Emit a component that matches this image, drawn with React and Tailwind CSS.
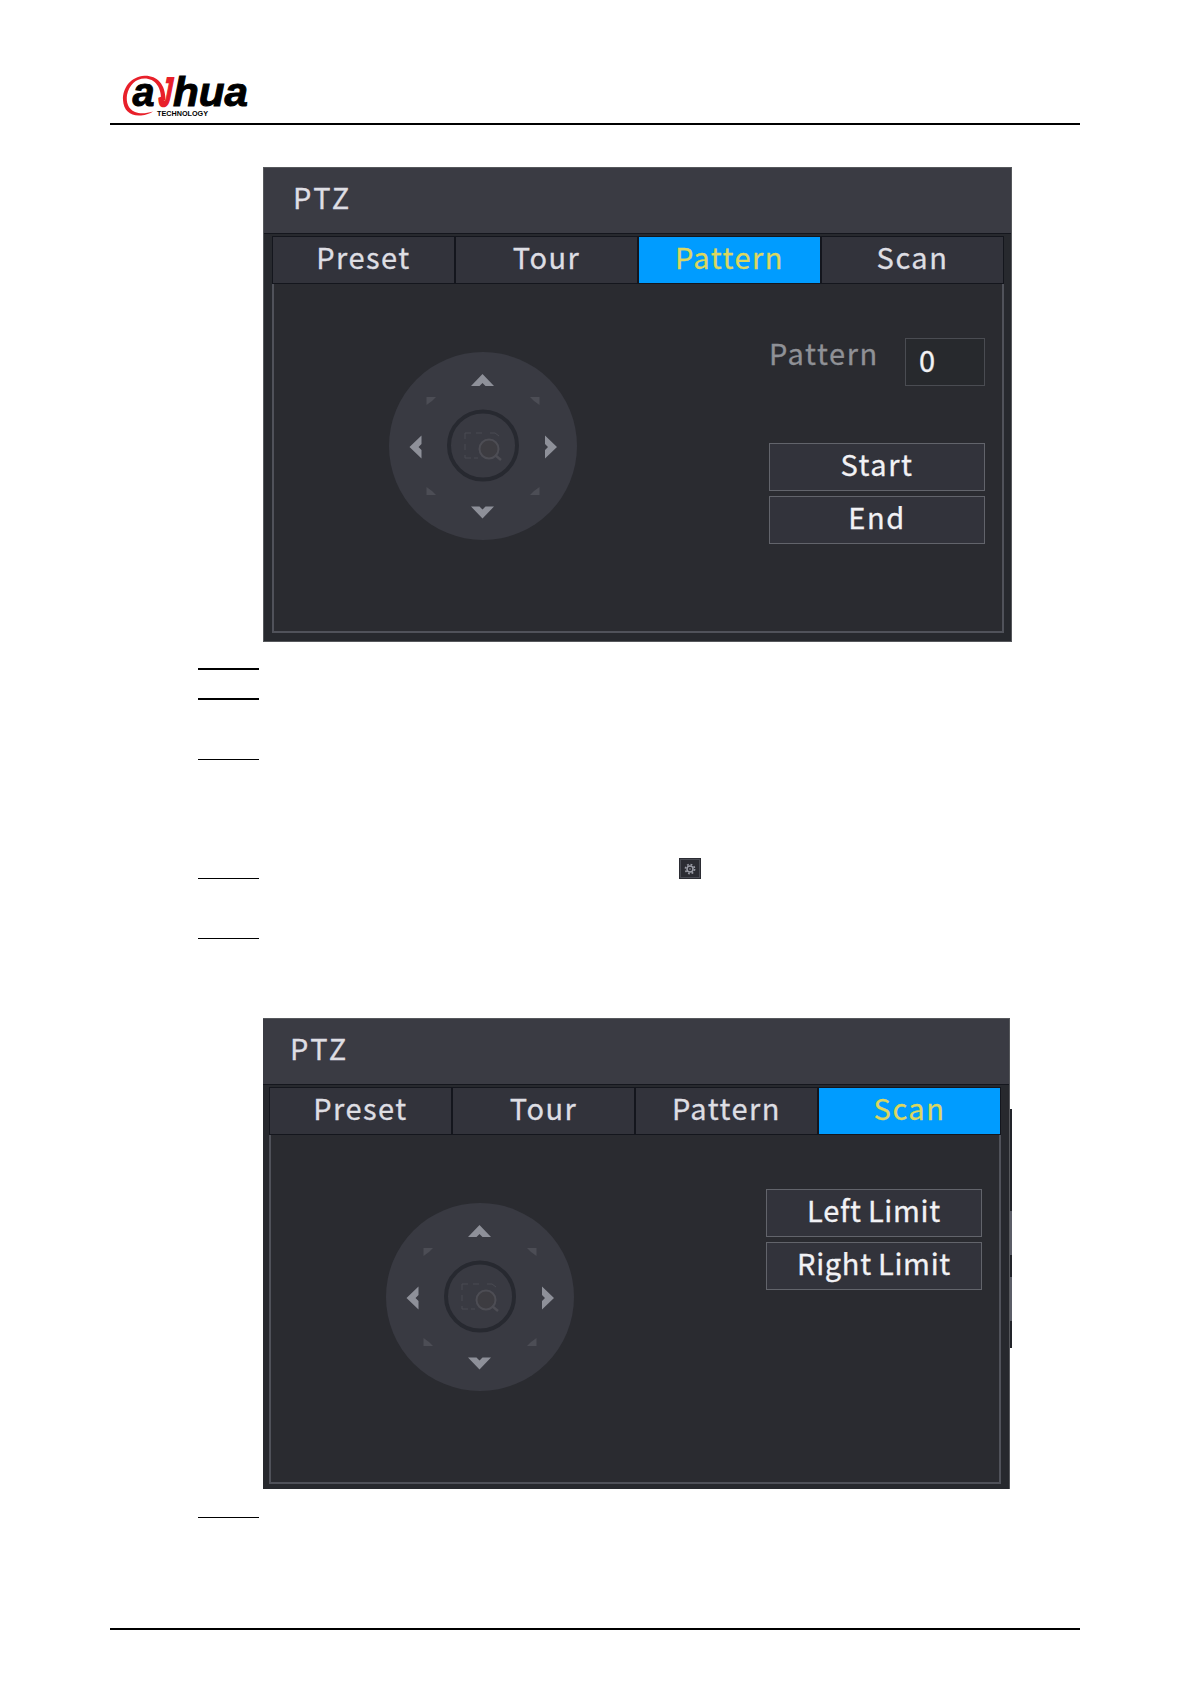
import clsx from 'clsx';

const TABS = ['Preset', 'Tour', 'Pattern', 'Scan'];

const ARROWS = [
  'translate(-0.5 -72)',
  'translate(74 1) rotate(90)',
  'translate(-0.5 72.5) rotate(180)',
  'translate(-73.5 1) rotate(-90)',
];

const CORNERS = ['scale(1 1)', 'scale(-1 1)', 'scale(1 -1)', 'scale(-1 -1)'];

function Logo() {
  return (
    <svg width="130" height="48" viewBox="0 0 130 48" className="block overflow-visible">
      <path
        d="M43.500 28C43.500 12 35 3.500 22.500 3.800C9 4.500 0.500 16 1 28C1.500 39 9 44.500 19 43.500C24 43 28 41.500 31 39.500C24 41.500 18 42 13 40C6 37 4 30 5 23C7 13 14 6.500 22.500 6.500C33 6.500 40 15 39 30Z"
        fill="#e8202a"
      />
      <g fontFamily="Liberation Sans, Arial, sans-serif" fontWeight="700" fontStyle="italic" fontSize="41">
        <text x="10.500" y="34" textLength="22" lengthAdjust="spacingAndGlyphs" stroke="#000" strokeWidth="1">a</text>
        <text
          x="36.500"
          y="33.500"
          textLength="13"
          lengthAdjust="spacingAndGlyphs"
          fill="#e8202a"
          stroke="#e8202a"
          strokeWidth="1.800"
          transform="translate(2.5 0) skewX(-5)"
        >
          J
        </text>
        <text x="51" y="34" textLength="75" lengthAdjust="spacingAndGlyphs" stroke="#000" strokeWidth="1">hua</text>
      </g>
      <text
        x="35"
        y="43.700"
        textLength="51"
        lengthAdjust="spacingAndGlyphs"
        fontFamily="Liberation Sans, Arial, sans-serif"
        fontWeight="700"
        fontSize="6.500"
      >
        TECHNOLOGY
      </text>
    </svg>
  );
}

function DirectionPad({ className }) {
  return (
    <svg width="188" height="188" viewBox="-94 -94 188 188" className={className}>
      <circle r="94" fill="#393a42" />
      <circle cy="-0.500" r="34" fill="#393a42" stroke="#272930" strokeWidth="4" />
      {ARROWS.map((transform) => (
        <path key={transform} transform={transform} d="M0 0L11.500 12H3L0 9L-3 12H-11.500Z" fill="#8e9099" />
      ))}
      {CORNERS.map((transform) => (
        <path key={transform} transform={transform} d="M-56.500-49H-47L-51-45L-56.500-41Z" fill="#4c4d55" />
      ))}
      <path d="M-18-7V-13H-12M-7-13H-1M7-13H12L16-10M-18-2V4M-18 9V12H-12M-9 12H-5" fill="none" stroke="#4a4b53" />
      <circle cx="6" cy="3" r="9.500" fill="#3d3c41" stroke="#4d4d54" strokeWidth="2" />
      <path d="M12 9L18 14" stroke="#4d4d54" strokeWidth="2.500" />
    </svg>
  );
}

function TitleBar({ className }) {
  return (
    <div
      className={clsx(
        'flex h-[66px] shrink-0 items-center border-b border-[#14161d] bg-[#3a3b43] pb-[9px] tracking-[2.8px] text-[#dedee3]',
        className,
      )}
    >
      PTZ
    </div>
  );
}

function TabBar({ active }) {
  return (
    <div className="grid h-12 shrink-0 grid-cols-4 bg-[#14161d] py-px tracking-[1.5px]">
      {TABS.map((tab) => (
        <div
          key={tab}
          className={clsx(
            'mx-px flex h-[46px] items-center justify-center pb-[8px]',
            tab === active ? 'bg-[#009cff] text-[#dcd75f]' : 'bg-[#32333b] text-[#dedee3]',
          )}
        >
          {tab}
        </div>
      ))}
    </div>
  );
}

function PanelButton({ children, className }) {
  return (
    <div
      className={clsx(
        'flex h-12 w-[216px] items-center justify-center border border-[#62646b] bg-[#32333b] pb-[7px] text-[#f2f2f5]',
        className,
      )}
    >
      {children}
    </div>
  );
}

function PatternPanel() {
  return (
    <section className="ml-[263px] flex h-[475px] w-[749px] flex-col border border-[#56585c] bg-[#27292e]">
      <TitleBar className="pl-[29px]" />
      <div className="mt-[2px] ml-[8px] flex w-[732px] flex-col">
        <TabBar active="Pattern" />
        <div className="flex h-[349px] border-2 border-t-0 border-[#50525a] bg-[#2a2b30]">
          <DirectionPad className="mt-[68px] ml-[115px] shrink-0" />
          <div className="mt-[54px] ml-[192px] w-[216px]">
            <div className="flex justify-between">
              <span className="tracking-[1.6px] text-[#8f9196]">Pattern</span>
              <div className="flex h-12 w-20 items-center border border-[#4a4c52] bg-[#27292d] pb-[6px] pl-[13px] text-[#f2f2f5]">
                0
              </div>
            </div>
            <div className="mt-[57px] flex flex-col gap-[5px]">
              <PanelButton className="tracking-[1.5px]">Start</PanelButton>
              <PanelButton className="tracking-[1.5px]">End</PanelButton>
            </div>
          </div>
        </div>
      </div>
    </section>
  );
}

function ScanPanel() {
  return (
    <div className="ml-[263px] flex h-[471px]">
      <section className="flex h-[471px] w-[747px] flex-col border-t border-r border-[#56585c] bg-[#27292e]">
        <TitleBar className="pl-[27px]" />
        <div className="mt-[2px] ml-[6px] flex w-[732px] flex-col">
          <TabBar active="Scan" />
          <div className="flex h-[349px] border-2 border-t-0 border-[#50525a] bg-[#2a2b30]">
            <DirectionPad className="mt-[68px] ml-[115px] shrink-0" />
            <div className="mt-[54px] ml-[192px] flex flex-col gap-[5px]">
              <PanelButton className="tracking-[0.7px] [word-spacing:-1px]">Left Limit</PanelButton>
              <PanelButton className="tracking-[0.7px] [word-spacing:-1px]">Right Limit</PanelButton>
            </div>
          </div>
        </div>
      </section>
      {/* edge of the window underneath */}
      <div className="mt-[91px] flex h-[239px] w-[2px] flex-col bg-[#22242a]">
        <div className="mt-[102px] h-[44px] bg-[#5b5d67]" />
        <div className="mt-[22px] h-[44px] bg-[#5b5d67]" />
      </div>
    </div>
  );
}

export default function App() {
  return (
    <div className="flex h-[1684px] w-[1191px] flex-col overflow-hidden bg-white font-['Noto_Sans_CJK_SC',sans-serif] text-[29px] leading-none tracking-[1.2px]">
      <header className="mr-[111px] ml-[110px] h-[125px] border-b-2 border-black pt-[72px] pl-[12px] tracking-normal">
        <Logo />
      </header>
      <div className="mt-[42px] [-webkit-text-stroke:0.3px]">
        <PatternPanel />
      </div>
      <div className="mt-[26px] ml-[198px] h-[2px] w-[61px] bg-black" />
      <div className="mt-[28px] ml-[198px] h-[2px] w-[61px] bg-black" />
      <div className="mt-[59px] ml-[198px] h-px w-[61px] bg-black" />
      <div className="mt-[98px] ml-[198px] flex h-[21px]">
        <div className="mt-5 h-px w-[61px] bg-black" />
        <div className="ml-[420px] flex h-[21px] w-[22px] items-center justify-center bg-[#2b2c33] outline-1 -outline-offset-2 outline-[#4b4d55]">
          <svg width="12" height="12" viewBox="-6 -6 12 12">
            <circle r="3" fill="none" stroke="#9a9ca6" strokeWidth="1.500" />
            <circle r="4.600" fill="none" stroke="#9a9ca6" strokeWidth="1.600" strokeDasharray="1.800 1.813" />
            <circle r="0.800" fill="#9a9ca6" />
          </svg>
        </div>
      </div>
      <div className="mt-[59px] ml-[198px] h-px w-[61px] bg-black" />
      <div className="mt-[79px] [-webkit-text-stroke:0.3px]">
        <ScanPanel />
      </div>
      <div className="mt-[28px] ml-[198px] h-px w-[61px] bg-black" />
      <footer className="mt-[110px] mr-[111px] ml-[110px] h-[2px] bg-black" />
    </div>
  );
}
